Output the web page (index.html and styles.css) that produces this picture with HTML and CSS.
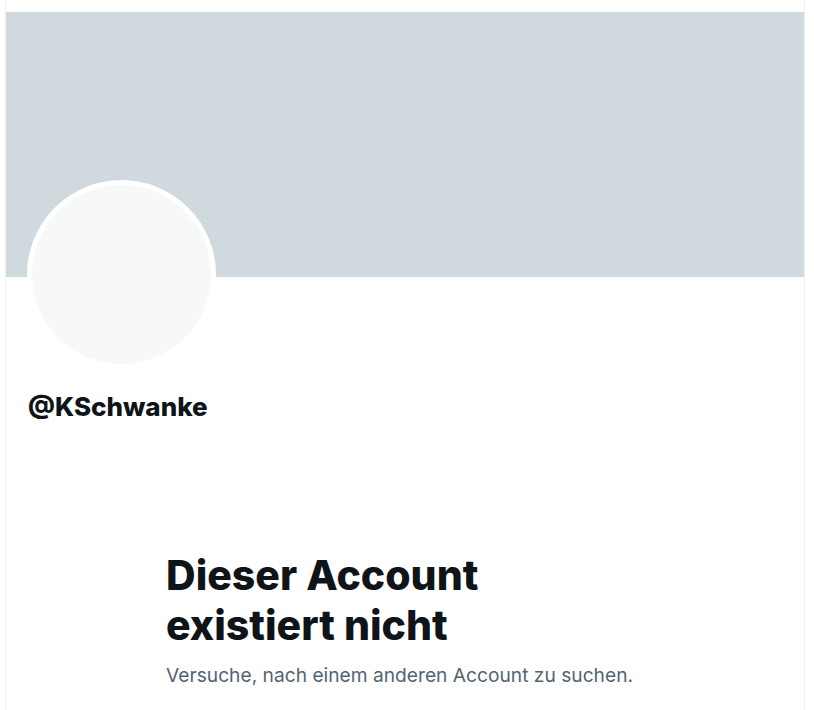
FILE: index.html
```html
<!DOCTYPE html>
<html lang="de">
<head>
    <meta charset="UTF-8">
    <meta name="viewport" content="width=device-width, initial-scale=1.0">
    <title>Profil</title>
    <link rel="stylesheet" href="styles.css">
</head>
<body>
    <main class="column">
        <div class="banner"></div>

        <div class="profile">
            <div class="avatar"></div>
            <div class="handle">@KSchwanke</div>
        </div>

        <section class="empty">
            <h1 class="empty-title">Dieser Account existiert nicht</h1>
            <p class="empty-text">Versuche, nach einem anderen Account zu suchen.</p>
        </section>
    </main>
</body>
</html>
```

FILE: styles.css
```css
body {
    margin: 0;
    padding: 0;
    background-color: #fff;
    font-family: Inter, "Liberation Sans", Arial, sans-serif;
    color: #0f1419;
}
.column {
    width: 798px;
    min-height: 710px;
    margin-left: 5px;
    padding-top: 12px;
    border-left: 1px solid #eff3f4;
    border-right: 1px solid #eff3f4;
    box-sizing: content-box;
}
.banner {
    height: 265px;
    background-color: #cfd9de;
}
.profile {
    padding: 0 21px;
}
.avatar {
    width: 179px;
    height: 179px;
    margin-top: -97px;
    border: 5px solid #fff;
    border-radius: 50%;
    background-color: #f7f9f9;
}
.handle {
    margin-top: 22px;
    padding-left: 1px;
    font-size: 26px;
    font-weight: 800;
    line-height: 32px;
}
.empty {
    margin: 127px 0 0 160px;
}
.empty-title {
    max-width: 340px;
    margin: 0;
    font-size: 41px;
    font-weight: 800;
    line-height: 50px;
}
.empty-text {
    margin: 11px 0 0;
    font-size: 19.2px;
    line-height: 28px;
    color: #536471;
}
```
